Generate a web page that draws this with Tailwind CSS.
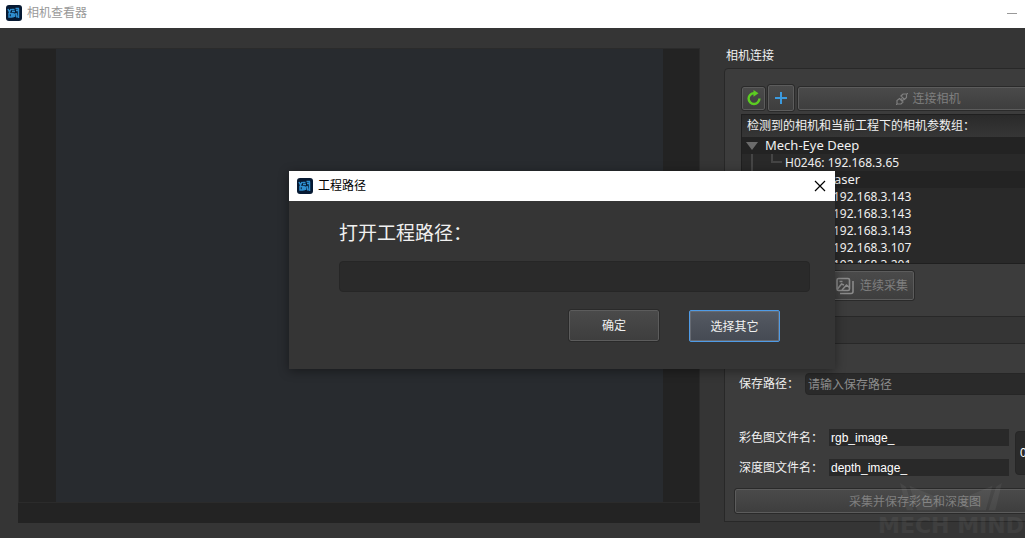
<!DOCTYPE html>
<html lang="zh-CN">
<head>
  <meta charset="UTF-8">
  <meta name="viewport" content="width=device-width, initial-scale=1.0">
  <title>相机查看器</title>
  <script src="https://cdn.jsdelivr.net/npm/@tailwindcss/browser@4"></script>
</head>
<body class="relative min-h-screen overflow-hidden bg-[#353535] font-['Noto_Sans','Noto_Sans_CJK_SC',sans-serif] text-xs text-[#f0f0f0]">

  <!-- Window title bar -->
  <header class="flex h-7 items-center bg-white pb-[3px] pl-1.5 pr-0.5 text-[#999999]">
    <svg class="h-4 w-4" viewBox="0 0 16 16" fill="none">
      <rect width="16" height="16" rx="3" fill="#071a33"/>
      <path d="M2 4l1.500 3L5 4M5.500 4.500h3M6 6.500h3M9.500 3.500h3.500M10 5.500h3M3 8.500h2.500v3.500H3zM7 8v4.500M8.500 8.500v3.500M10 8l1 4.500M12.500 3.500v9.500" stroke="#2f8fd0" stroke-width="1.500"/>
    </svg>
    <h1 class="ml-[5px]">相机查看器</h1>
    <button class="ml-auto flex h-4 w-4 items-center" aria-label="最小化">
      <svg class="h-4 w-4" viewBox="0 0 16 16"><path d="M0 8.500h10" stroke="#999999"/></svg>
    </button>
  </header>

  <main class="flex overflow-hidden">
    <!-- Image viewer -->
    <section class="ml-[18px] mt-5 flex h-[475px] min-w-0 flex-1 flex-col bg-[#232323]">
      <div class="flex flex-1 border border-[#2b2b2b]">
        <div class="w-[37px]"></div>
        <div class="flex-1 bg-[#282b2f]"></div>
        <div class="w-9"></div>
      </div>
      <div class="h-5"></div>
    </section>

    <!-- Side panel -->
    <aside class="ml-6 w-[301px] shrink-0 overflow-hidden pb-[15px] pt-[18px]">
      <div class="w-[380px]">
        <h2 class="mb-0.5 pl-0.5 leading-5">相机连接</h2>

        <div class="rounded border border-[#282828] bg-[#3c3c3c] px-4 py-4">
          <div class="flex h-[26px] items-center pl-px">
            <button class="flex h-[23px] w-[23px] items-center justify-center rounded-xs border border-[#5c5c5c] bg-linear-to-b from-[#4a4a4a] to-[#3e3e3e] outline outline-[#2a2a2a]" aria-label="刷新">
              <svg class="h-4 w-4" viewBox="0 0 16 16" fill="none">
                <path d="M9 3.200H8a5.400 5.400 0 1 0 5.400 5.400" stroke="#5ccc22" stroke-width="2.400"/>
                <path d="M7.500 0l5 3.300-5 3.400z" fill="#5ccc22"/>
              </svg>
            </button>
            <button class="ml-[3px] flex h-[26px] w-[26px] items-center justify-center rounded-xs border border-[#5c5c5c] bg-linear-to-b from-[#4a4a4a] to-[#3e3e3e] outline outline-[#2a2a2a]" aria-label="添加">
              <svg class="h-3 w-3" viewBox="0 0 12 12"><path d="M6 0v12M0 6h12" stroke="#3b9ade" stroke-width="2"/></svg>
            </button>
            <button class="ml-1 flex h-[23px] w-[261px] items-center justify-center gap-1 rounded-xs border border-[#5c5c5c] bg-linear-to-b from-[#4a4a4a] to-[#3e3e3e] pt-px text-[#7f7f7f] outline outline-[#2a2a2a]">
              <svg class="h-3 w-3" viewBox="0 0 12 12" fill="none" stroke="#7f7f7f" stroke-width="1.200">
                <path d="M5 3l2-2h3.500v3.500L8.500 6.500zM3.500 5.500l3.500 3.500-2 2H1V7.500zM4.500 7l1.500-1.500M6 8l1.500-1.500M10.300 1.700L12 0M1.700 10.300L0 12"/>
              </svg>
              连接相机
            </button>
          </div>

          <!-- Camera tree -->
          <div class="mt-[3px] h-[150px] overflow-hidden border border-[#1f1f1f] bg-[#292929] leading-[17px]">
            <div class="h-[22px] bg-linear-to-b from-[#2a2a2a] to-[#363636] pl-[5px] leading-[22px]">检测到的相机和当前工程下的相机参数组：</div>
            <ul>
              <li>
                <div class="flex items-center bg-[#232323] pl-1 text-[13px] leading-[17px]">
                  <svg class="mr-[7px] h-3 w-3" viewBox="0 0 12 12"><path d="M0 2h12L6 10z" fill="#6b6b6b"/></svg>
                  Mech-Eye Deep
                </div>
                <ul>
                  <li class="flex pl-[9px]">
                    <svg class="mr-0.5 h-[17px] w-8" viewBox="0 0 32 17" fill="none" stroke="#454545" stroke-width="2"><path d="M1 0v17M21 0v8h10"/></svg>
                    H0246: 192.168.3.65
                  </li>
                </ul>
              </li>
              <li>
                <div class="bg-[#232323] pl-[23px] text-[13px] leading-[17px]">Mech-Eye Laser</div>
                <ul class="pl-[91px]">
                  <li>192.168.3.143</li>
                  <li>192.168.3.143</li>
                  <li>192.168.3.143</li>
                  <li>192.168.3.107</li>
                  <li>192.168.3.201</li>
                </ul>
              </li>
            </ul>
          </div>

          <button class="ml-[87px] mt-[7px] flex h-[29px] w-[86px] items-center gap-1.5 rounded-xs border border-[#5c5c5c] bg-linear-to-b from-[#4a4a4a] to-[#3e3e3e] pl-[7px] text-[#7f7f7f] outline outline-[#2a2a2a]">
            <svg class="h-[18px] w-[18px] shrink-0" viewBox="0 0 18 18" fill="none" stroke="#8a8a8a" stroke-width="1.600">
              <rect x="1" y="1.500" width="12.500" height="12" rx="1.500"/>
              <path d="M1.500 12l4-5 2.500 1M6 13l4.500-5 3 2.500M3.500 4.500h3M17 4v10.500a2 2 0 0 1-2 2H4"/>
            </svg>
            连续采集
          </button>
        </div>

        <!-- Save settings -->
        <form class="mt-[26px] border border-[#282828] bg-[#3c3c3c] pb-2 pl-2.5 pr-2 pt-[29px]">
          <div class="flex items-center pl-1">
            <label for="savePath" class="w-[66px]">保存路径：</label>
            <input id="savePath" type="text" placeholder="请输入保存路径" class="h-[22px] min-w-0 flex-1 rounded border border-[#262626] bg-[#2a2a2a] px-0.5 placeholder:text-[#8c8c8c]">
          </div>
          <div class="mt-[34px] flex items-center pl-1">
            <div class="grid grid-cols-[90px_180px] items-center gap-y-[13px]">
              <label for="rgbName" class="leading-[17px]">彩色图文件名：</label>
              <input id="rgbName" type="text" value="rgb_image_" class="h-[17px] min-w-0 bg-[#292929] px-0.5 font-['Liberation_Sans',sans-serif] text-white">
              <label for="depthName" class="leading-[17px]">深度图文件名：</label>
              <input id="depthName" type="text" value="depth_image_" class="h-[17px] min-w-0 bg-[#292929] px-0.5 font-['Liberation_Sans',sans-serif] text-white">
            </div>
            <input type="text" value="0" aria-label="序号" class="ml-1.5 h-11 w-16 rounded border border-[#262626] bg-[#2a2a2a] px-1 font-['Liberation_Sans',sans-serif] text-white">
          </div>
          <button type="button" class="mt-[13px] h-6 w-full rounded-xs border border-[#5c5c5c] bg-linear-to-b from-[#4a4a4a] to-[#3e3e3e] pt-px text-[#7f7f7f] outline outline-[#2a2a2a]">采集并保存彩色和深度图</button>
        </form>
      </div>
    </aside>
  </main>

  <!-- Watermark -->
  <div class="pointer-events-none absolute bottom-0 right-0 flex w-[148px] flex-col items-center text-white/5">
    <svg class="h-8 w-28" viewBox="0 0 112 34" fill="currentColor">
      <path d="M2 1l6 4 8 25H9zM12 4l33 14 11 10 11-10 33-14-7 26H73l-9-10-8 9-8-9-9 10H20zM110 1l-6 4-8 25h7z"/>
    </svg>
    <span class="whitespace-nowrap font-['DejaVu_Sans',sans-serif] text-[22px] font-bold leading-6">MECH MIND</span>
  </div>

  <!-- Project path dialog -->
  <div role="dialog" aria-labelledby="dialogTitle" class="absolute left-[289px] top-[171px] w-[546px] bg-[#353535] shadow-[0_2px_10px_rgba(0,0,0,0.4)]">
    <div class="flex h-[30px] items-center bg-white pb-px pl-2 pr-2 text-black">
      <svg class="h-4 w-4" viewBox="0 0 16 16" fill="none">
        <rect width="16" height="16" rx="3" fill="#071a33"/>
        <path d="M2 4l1.500 3L5 4M5.500 4.500h3M6 6.500h3M9.500 3.500h3.500M10 5.500h3M3 8.500h2.500v3.500H3zM7 8v4.500M8.500 8.500v3.500M10 8l1 4.500M12.500 3.500v9.500" stroke="#2f8fd0" stroke-width="1.500"/>
      </svg>
      <h2 id="dialogTitle" class="ml-[5px]">工程路径</h2>
      <button class="ml-auto" aria-label="关闭">
        <svg class="h-3.5 w-3.5" viewBox="0 0 14 14"><path d="M2 2l10 10M12 2L2 12" stroke="#000000" stroke-width="1.200"/></svg>
      </button>
    </div>
    <div class="pb-[27px] pl-[50px] pr-[25px] pt-[17px]">
      <label for="projectPath" class="block text-[19px] leading-[30px]">打开工程路径：</label>
      <input id="projectPath" type="text" class="mt-[13px] block h-[31px] w-full rounded border border-[#262626] bg-[#2a2a2a] px-2">
      <div class="mt-[18px] flex justify-end gap-[30px] pr-[30px]">
        <button class="h-[31px] w-[90px] rounded-xs border border-[#5c5c5c] bg-linear-to-b from-[#4a4a4a] to-[#3e3e3e] pt-px outline outline-[#2a2a2a]">确定</button>
        <button class="h-8 w-[91px] rounded-xs border border-[#4f9be6] bg-linear-to-b from-[#555a63] to-[#454a53] pt-px inset-ring inset-ring-[#666a72]">选择其它</button>
      </div>
    </div>
  </div>

</body>
</html>
